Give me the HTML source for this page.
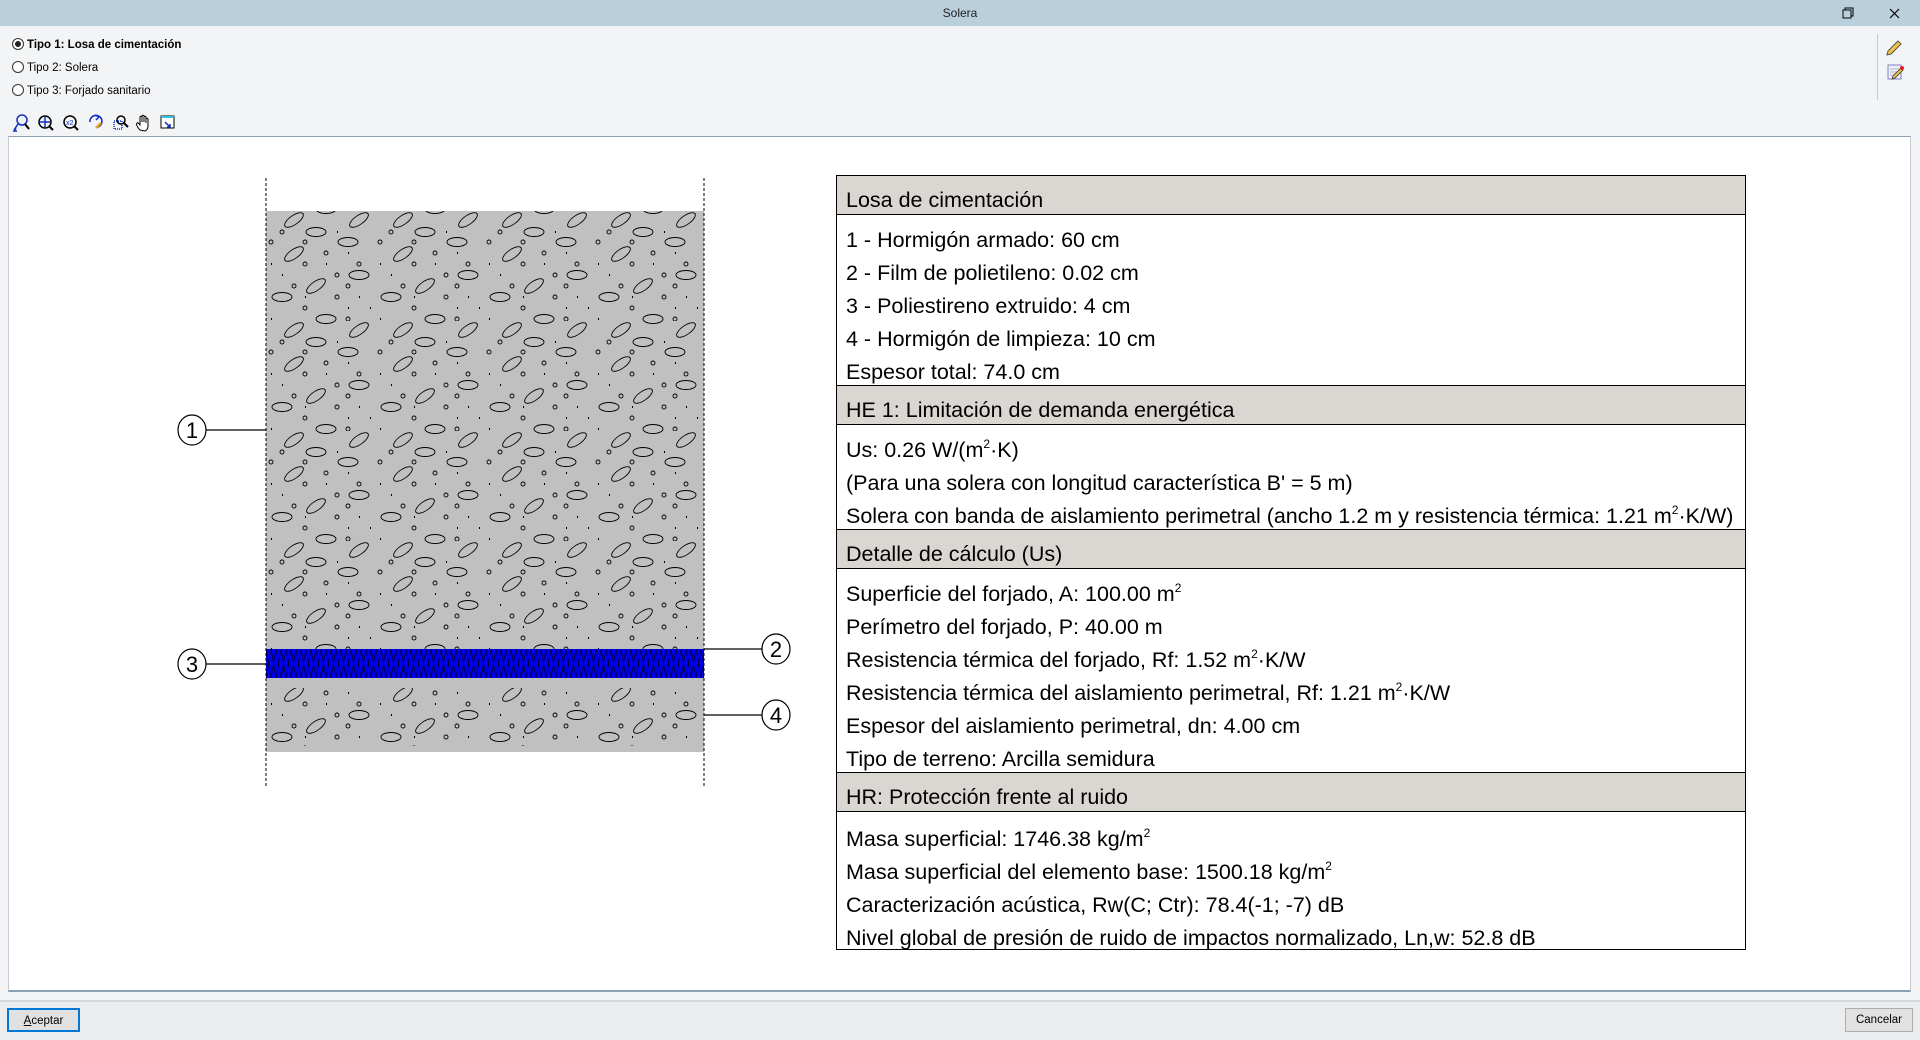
<!DOCTYPE html>
<html><head><meta charset="utf-8">
<style>
*{margin:0;padding:0;box-sizing:border-box}
body{width:1920px;height:1040px;background:#f3f4f6;font-family:"Liberation Sans",sans-serif;position:relative;overflow:hidden}
.title{position:absolute;left:0;top:0;width:1920px;height:26px;background:#b9cfdc;text-align:center;font-size:12px;line-height:26px;color:#222}
.radio{position:absolute;left:12px;font-size:11.5px;color:#000;height:16px;line-height:16px}
.radio i{display:inline-block;width:12px;height:12px;border:1px solid #333;border-radius:50%;vertical-align:-2px;margin-right:3px;position:relative;background:#fff}
.radio i.on::after{content:"";position:absolute;left:2px;top:2px;width:6px;height:6px;border-radius:50%;background:#222}
.panel{position:absolute;left:8px;top:136px;width:1903px;height:856px;background:#fff;border-top:1px solid #8aa0b5;border-left:1px solid #c8ccd2;border-right:1px solid #c8ccd2;border-bottom:2px solid #8aa0b5}
.tbl{position:absolute;left:836px;top:175px;width:910px;border:1px solid #000;background:#fff;font-size:21.5px;color:#000}
.h{background:#dad7d3;height:39px;line-height:48px;padding-left:9px;border-bottom:1px solid #000;overflow:hidden;white-space:nowrap}
.b{padding:5px 0 0 9px;border-bottom:1px solid #000}
.b div{height:33px;line-height:33px;white-space:nowrap;position:relative;top:4px}
.last{border-bottom:none}
.last div{top:6px}
sup{font-size:12px;vertical-align:9px;line-height:0}
.footer{position:absolute;left:0;top:1000px;width:1920px;height:40px;background:#ebecee;border-top:2px solid #d6d8dc}
.btn{position:absolute;height:24px;font-size:11.5px;line-height:22px;text-align:center;background:#e1e1e1}
</style></head><body>
<div class="title">Solera</div>
<svg style="position:absolute;left:1840px;top:6px" width="70" height="16">
<rect x="3" y="4" width="8" height="8" fill="none" stroke="#000"/><path d="M5 4V2h8v8h-2" fill="none" stroke="#000"/>
<path d="M50 3l9 9M59 3l-9 9" stroke="#000" stroke-width="1.2"/>
</svg>
<div class="radio" style="top:37px;font-weight:bold"><i class="on"></i>Tipo 1: Losa de cimentación</div>
<div class="radio" style="top:60px"><i></i>Tipo 2: Solera</div>
<div class="radio" style="top:83px"><i></i>Tipo 3: Forjado sanitario</div>
<svg style="position:absolute;left:10px;top:112px" width="180" height="22" fill="none" stroke-width="1.5">
<g stroke="#1030c0"><circle cx="12" cy="8" r="5"/><path d="M8 12l-4 6M6 16l-2 3 3 0"/><path d="M15 12l4 5" stroke="#000" stroke-width="2"/></g>
<g><circle cx="35" cy="10" r="6" stroke="#000"/><path d="M35 5v10M30 10h10" stroke="#1030c0"/><path d="M39 14l4 4" stroke="#000" stroke-width="2"/></g>
<g><circle cx="60" cy="10" r="6" stroke="#000"/><text x="56" y="13" font-size="7" fill="#1030c0" stroke="none" font-family="Liberation Sans">x2</text><path d="M64 14l4 4" stroke="#000" stroke-width="2"/></g>
<g><path d="M80 10a6 6 0 1 1 8 5" stroke="#1030c0"/><path d="M85 3l4 2-3 3" stroke="#1030c0"/><path d="M86 16l5-5" stroke="#e0a020" stroke-width="2.5"/></g>
<g><rect x="104" y="9" width="8" height="8" stroke="#1030c0" stroke-dasharray="1 1"/><circle cx="111" cy="8" r="4" stroke="#000"/><path d="M114 11l4 4" stroke="#000" stroke-width="2"/></g>
<g stroke="#000" stroke-width="1"><path d="M130 18c-3-3-4-6-3-7s2 1 3 2V5c0-1 2-1 2 0v5V4c0-1 2-1 2 0v6V5c0-1 2-1 2 0v6V7c0-1 2-1 2 0v7c0 2-1 4-3 5z" fill="#fff"/></g>
<g><rect x="151" y="4" width="13" height="12" stroke="#000" stroke-width="1" fill="#fff"/><path d="M151 5h13" stroke="#30c0e0" stroke-width="2"/><path d="M155 10l5 5M160 12v3h-3" stroke="#1030c0"/></g>
</svg>
<div style="position:absolute;left:1877px;top:34px;width:1px;height:66px;background:#c8c8c8"></div>
<svg style="position:absolute;left:1884px;top:36px" width="24" height="46">
<path d="M4 15l10-10 3 3-10 10-4 1z" fill="#f0c840" stroke="#555" stroke-width="1"/>
<rect x="4" y="29" width="13" height="14" fill="#eef" stroke="#8080c0"/><path d="M6 33h9M6 36h9M6 39h9" stroke="#bbb"/><path d="M9 40l8-8 2 2-8 8-3 1z" fill="#f0c840" stroke="#333" stroke-width=".8"/><circle cx="18" cy="32" r="2" fill="#e02020"/>
</svg>
<div class="panel"></div>
<svg style="position:absolute;left:0;top:0" width="830" height="1000">
<defs>
<pattern id="conc" x="266" y="211" width="109" height="110" patternUnits="userSpaceOnUse">
<g fill="none" stroke="#000" stroke-width="0.9">
<ellipse cx="50" cy="21" rx="10" ry="4.5"/><ellipse cx="82" cy="31" rx="10" ry="4.5"/>
<ellipse cx="28" cy="43" rx="11" ry="4.5" transform="rotate(-35 28 43)"/>
<ellipse cx="93" cy="64" rx="10" ry="4.5"/>
<ellipse cx="50" cy="75" rx="11" ry="4.5" transform="rotate(-35 50 75)"/>
<ellipse cx="16" cy="86" rx="10" ry="4.5"/>
<ellipse cx="93" cy="9" rx="11" ry="4.5" transform="rotate(-35 93 9)"/>
<ellipse cx="28" cy="9" rx="11" ry="4.5" transform="rotate(-35 28 9)"/>
<ellipse cx="60" cy="108" rx="10" ry="4.5"/><ellipse cx="60" cy="-2" rx="10" ry="4.5"/>
<circle cx="16" cy="21" r="2"/><circle cx="5" cy="31" r="2"/><circle cx="39" cy="31" r="2"/><circle cx="60" cy="42" r="2"/>
<circle cx="39" cy="53" r="2"/><circle cx="93" cy="53" r="2"/><circle cx="71" cy="64" r="2"/><circle cx="28" cy="75" r="2"/>
<circle cx="82" cy="75" r="2"/><circle cx="71" cy="86" r="2"/><circle cx="39" cy="97" r="2"/><circle cx="82" cy="108" r="2"/>
</g>
<g fill="#000"><rect x="71" y="20" width="1" height="2"/><rect x="82" y="41" width="1" height="2"/><rect x="5" y="52" width="1" height="2"/><rect x="60" y="52" width="1" height="2"/><rect x="16" y="63" width="1" height="2"/><rect x="39" y="85" width="1" height="2"/><rect x="93" y="85" width="1" height="2"/><rect x="82" y="96" width="1" height="2"/><rect x="104" y="96" width="1" height="2"/><rect x="5" y="107" width="1" height="2"/></g>
</pattern>
<pattern id="ins" x="266" y="649" width="10" height="29" patternUnits="userSpaceOnUse">
<rect width="10" height="29" fill="#0000f0"/>
<path d="M0 0L5 29L10 0M0 29L5 0L10 29" stroke="#000030" stroke-width="0.7" fill="none"/>
</pattern>
</defs>
<rect x="266" y="211" width="438" height="438" fill="#c0c0c0"/>
<rect x="266" y="211" width="438" height="438" fill="url(#conc)"/>
<rect x="266" y="678" width="438" height="74" fill="#c0c0c0"/>
<rect x="266" y="688" width="438" height="58" fill="url(#conc)"/>
<rect x="266" y="649" width="438" height="29" fill="url(#ins)"/>
<path d="M266 178V787M704 178V787" stroke="#000" stroke-dasharray="3 2"/>
<g stroke="#000" stroke-width="1.2" fill="#fff">
<path d="M206 430H266M206 664H266M704 649H762M704 715H762"/>
<ellipse cx="192" cy="430" rx="14" ry="15"/><ellipse cx="192" cy="664" rx="14" ry="15"/>
<ellipse cx="776" cy="649" rx="14" ry="15"/><ellipse cx="776" cy="715" rx="14" ry="15"/>
</g>
<g font-size="22" text-anchor="middle" font-family="Liberation Sans">
<text x="192" y="438">1</text><text x="192" y="672">3</text><text x="776" y="657">2</text><text x="776" y="723">4</text>
</g>
</svg>
<div class="tbl">
<div class="h">Losa de cimentación</div>
<div class="b"><div>1 - Hormigón armado: 60 cm</div><div>2 - Film de polietileno: 0.02 cm</div><div>3 - Poliestireno extruido: 4 cm</div><div>4 - Hormigón de limpieza: 10 cm</div><div>Espesor total: 74.0 cm</div></div>
<div class="h">HE 1: Limitación de demanda energética</div>
<div class="b"><div>Us: 0.26 W/(m<sup>2</sup>·K)</div><div>(Para una solera con longitud característica B' = 5 m)</div><div>Solera con banda de aislamiento perimetral (ancho 1.2 m y resistencia térmica: 1.21 m<sup>2</sup>·K/W)</div></div>
<div class="h">Detalle de cálculo (Us)</div>
<div class="b"><div>Superficie del forjado, A: 100.00 m<sup>2</sup></div><div>Perímetro del forjado, P: 40.00 m</div><div>Resistencia térmica del forjado, Rf: 1.52 m<sup>2</sup>·K/W</div><div>Resistencia térmica del aislamiento perimetral, Rf: 1.21 m<sup>2</sup>·K/W</div><div>Espesor del aislamiento perimetral, dn: 4.00 cm</div><div>Tipo de terreno: Arcilla semidura</div></div>
<div class="h">HR: Protección frente al ruido</div>
<div class="b last" style="padding-top:5px"><div>Masa superficial: 1746.38 kg/m<sup>2</sup></div><div>Masa superficial del elemento base: 1500.18 kg/m<sup>2</sup></div><div>Caracterización acústica, Rw(C; Ctr): 78.4(-1; -7) dB</div><div>Nivel global de presión de ruido de impactos normalizado, Ln,w: 52.8 dB</div></div>
</div>
<div class="footer"></div>
<div class="btn" style="left:7px;top:1008px;width:73px;border:2px solid #0078d7"><u>A</u>ceptar</div>
<div class="btn" style="left:1845px;top:1008px;width:68px;border:1px solid #adadad">Cancelar</div>
</body></html>
